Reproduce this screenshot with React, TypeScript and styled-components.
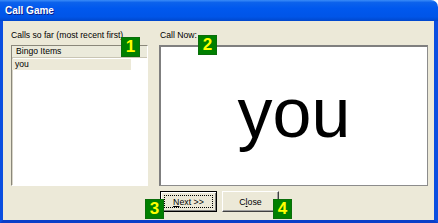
import styled, { createGlobalStyle } from "styled-components";

const GlobalStyle = createGlobalStyle`
  html, body { margin: 0; padding: 0; background: #ffffff; }
  body { font-family: "Liberation Sans", Arial, sans-serif; }
`;

const Window = styled.div`
  position: relative;
  width: 438px;
  height: 223px;
  display: flex;
  flex-direction: column;
  overflow: hidden;
`;

const TitleBar = styled.div`
  height: 21px;
  flex: none;
  display: flex;
  align-items: center;
  padding-left: 5px;
  border-top-right-radius: 7px;
  background: linear-gradient(
    to bottom,
    #3a8cf8 0%,
    #0c62ec 12%,
    #0058ee 40%,
    #0055e8 80%,
    #0047cc 100%
  );
  color: #ffffff;
  font-weight: bold;
  font-size: 10px;
  text-shadow: 1px 1px #0a1e8a;
`;

const Body = styled.div`
  flex: 1;
  background: #ece9d8;
  border-left: 3px solid #0a4ee0;
  border-right: 4px solid #0a4ee0;
  border-bottom: 3px solid #0a3fc8;
  padding: 8px 6px 8px 8px;
  display: grid;
  grid-template-columns: 137px 1fr;
  grid-template-rows: 16px 141px 1fr;
  column-gap: 11px;
`;

const Label = styled.div<{ $indent?: number }>`
  font-size: 8.6px;
  line-height: 13px;
  color: #000000;
  padding-left: ${(p) => p.$indent ?? 0}px;
`;

const ListBox = styled.div`
  background: #ffffff;
  border-style: solid;
  border-width: 1px;
  border-color: #8a877a #ffffff #ffffff #8a877a;
  box-shadow: inset 1px 1px 0 #d8d5c8;
  display: flex;
  flex-direction: column;
`;

const ListHeader = styled.div`
  height: 11px;
  background: #ebeadb;
  border-bottom: 1px solid #c9c5b4;
  padding-left: 4px;
  font-size: 8.6px;
  line-height: 11px;
`;

const ListRow = styled.div<{ $selected?: boolean }>`
  width: 119px;
  height: 11px;
  margin-top: 1px;
  padding-left: 3px;
  box-sizing: border-box;
  font-size: 8.6px;
  line-height: 11px;
  background: ${(p) => (p.$selected ? "#ece9d8" : "transparent")};
`;

const CallBox = styled.div`
  background: #ffffff;
  border-style: solid;
  border-width: 2px 1px 1px 2px;
  border-color: #7f7f7f #8c8c8c #8c8c8c #7f7f7f;
  display: flex;
  align-items: center;
  justify-content: center;
  font-size: 70px;
  color: #000000;
  padding-bottom: 6px;
  box-sizing: border-box;
`;

const ButtonRow = styled.div`
  grid-column: 2;
  display: flex;
  gap: 5px;
  padding-left: 1px;
  align-items: flex-end;
`;

const Button = styled.button<{ $default?: boolean }>`
  width: 57px;
  height: 21px;
  padding: 0;
  font-family: "Liberation Sans", Arial, sans-serif;
  font-size: 8.8px;
  color: #000000;
  background: #ece9d8;
  border-style: solid;
  border-width: 1px;
  border-color: ${(p) =>
    p.$default ? "#000000" : "#ffffff #404040 #404040 #ffffff"};
  box-shadow: ${(p) =>
    p.$default
      ? "inset 1px 1px 0 #ffffff, inset -1px -1px 0 #808080"
      : "inset -1px -1px 0 #a0a0a0"};
  outline: ${(p) => (p.$default ? "1px dotted #000000" : "none")};
  outline-offset: -5px;
`;

const Badge = styled.div<{ $x: number; $y: number }>`
  position: absolute;
  left: ${(p) => p.$x}px;
  top: ${(p) => p.$y}px;
  width: 19px;
  height: 20px;
  background: #008000;
  box-shadow: inset 0 0 0 1px #0a6e0a;
  color: #ffff00;
  font-family: "Liberation Sans", Arial, sans-serif;
  font-weight: bold;
  font-size: 17px;
  line-height: 20px;
  text-align: center;
`;

export default function App() {
  return (
    <>
      <GlobalStyle />
      <Window>
        <TitleBar>Call Game</TitleBar>
        <Body>
          <Label>Calls so far (most recent first)</Label>
          <Label $indent={1}>Call Now:</Label>
          <ListBox>
            <ListHeader>Bingo Items</ListHeader>
            <ListRow $selected>you</ListRow>
          </ListBox>
          <CallBox>you</CallBox>
          <ButtonRow>
            <Button $default>
              <u>N</u>ext &gt;&gt;
            </Button>
            <Button>
              C<u>l</u>ose
            </Button>
          </ButtonRow>
        </Body>
        <Badge $x={121} $y={37}>1</Badge>
        <Badge $x={198} $y={35}>2</Badge>
        <Badge $x={145} $y={199}>3</Badge>
        <Badge $x={273} $y={199}>4</Badge>
      </Window>
    </>
  );
}
